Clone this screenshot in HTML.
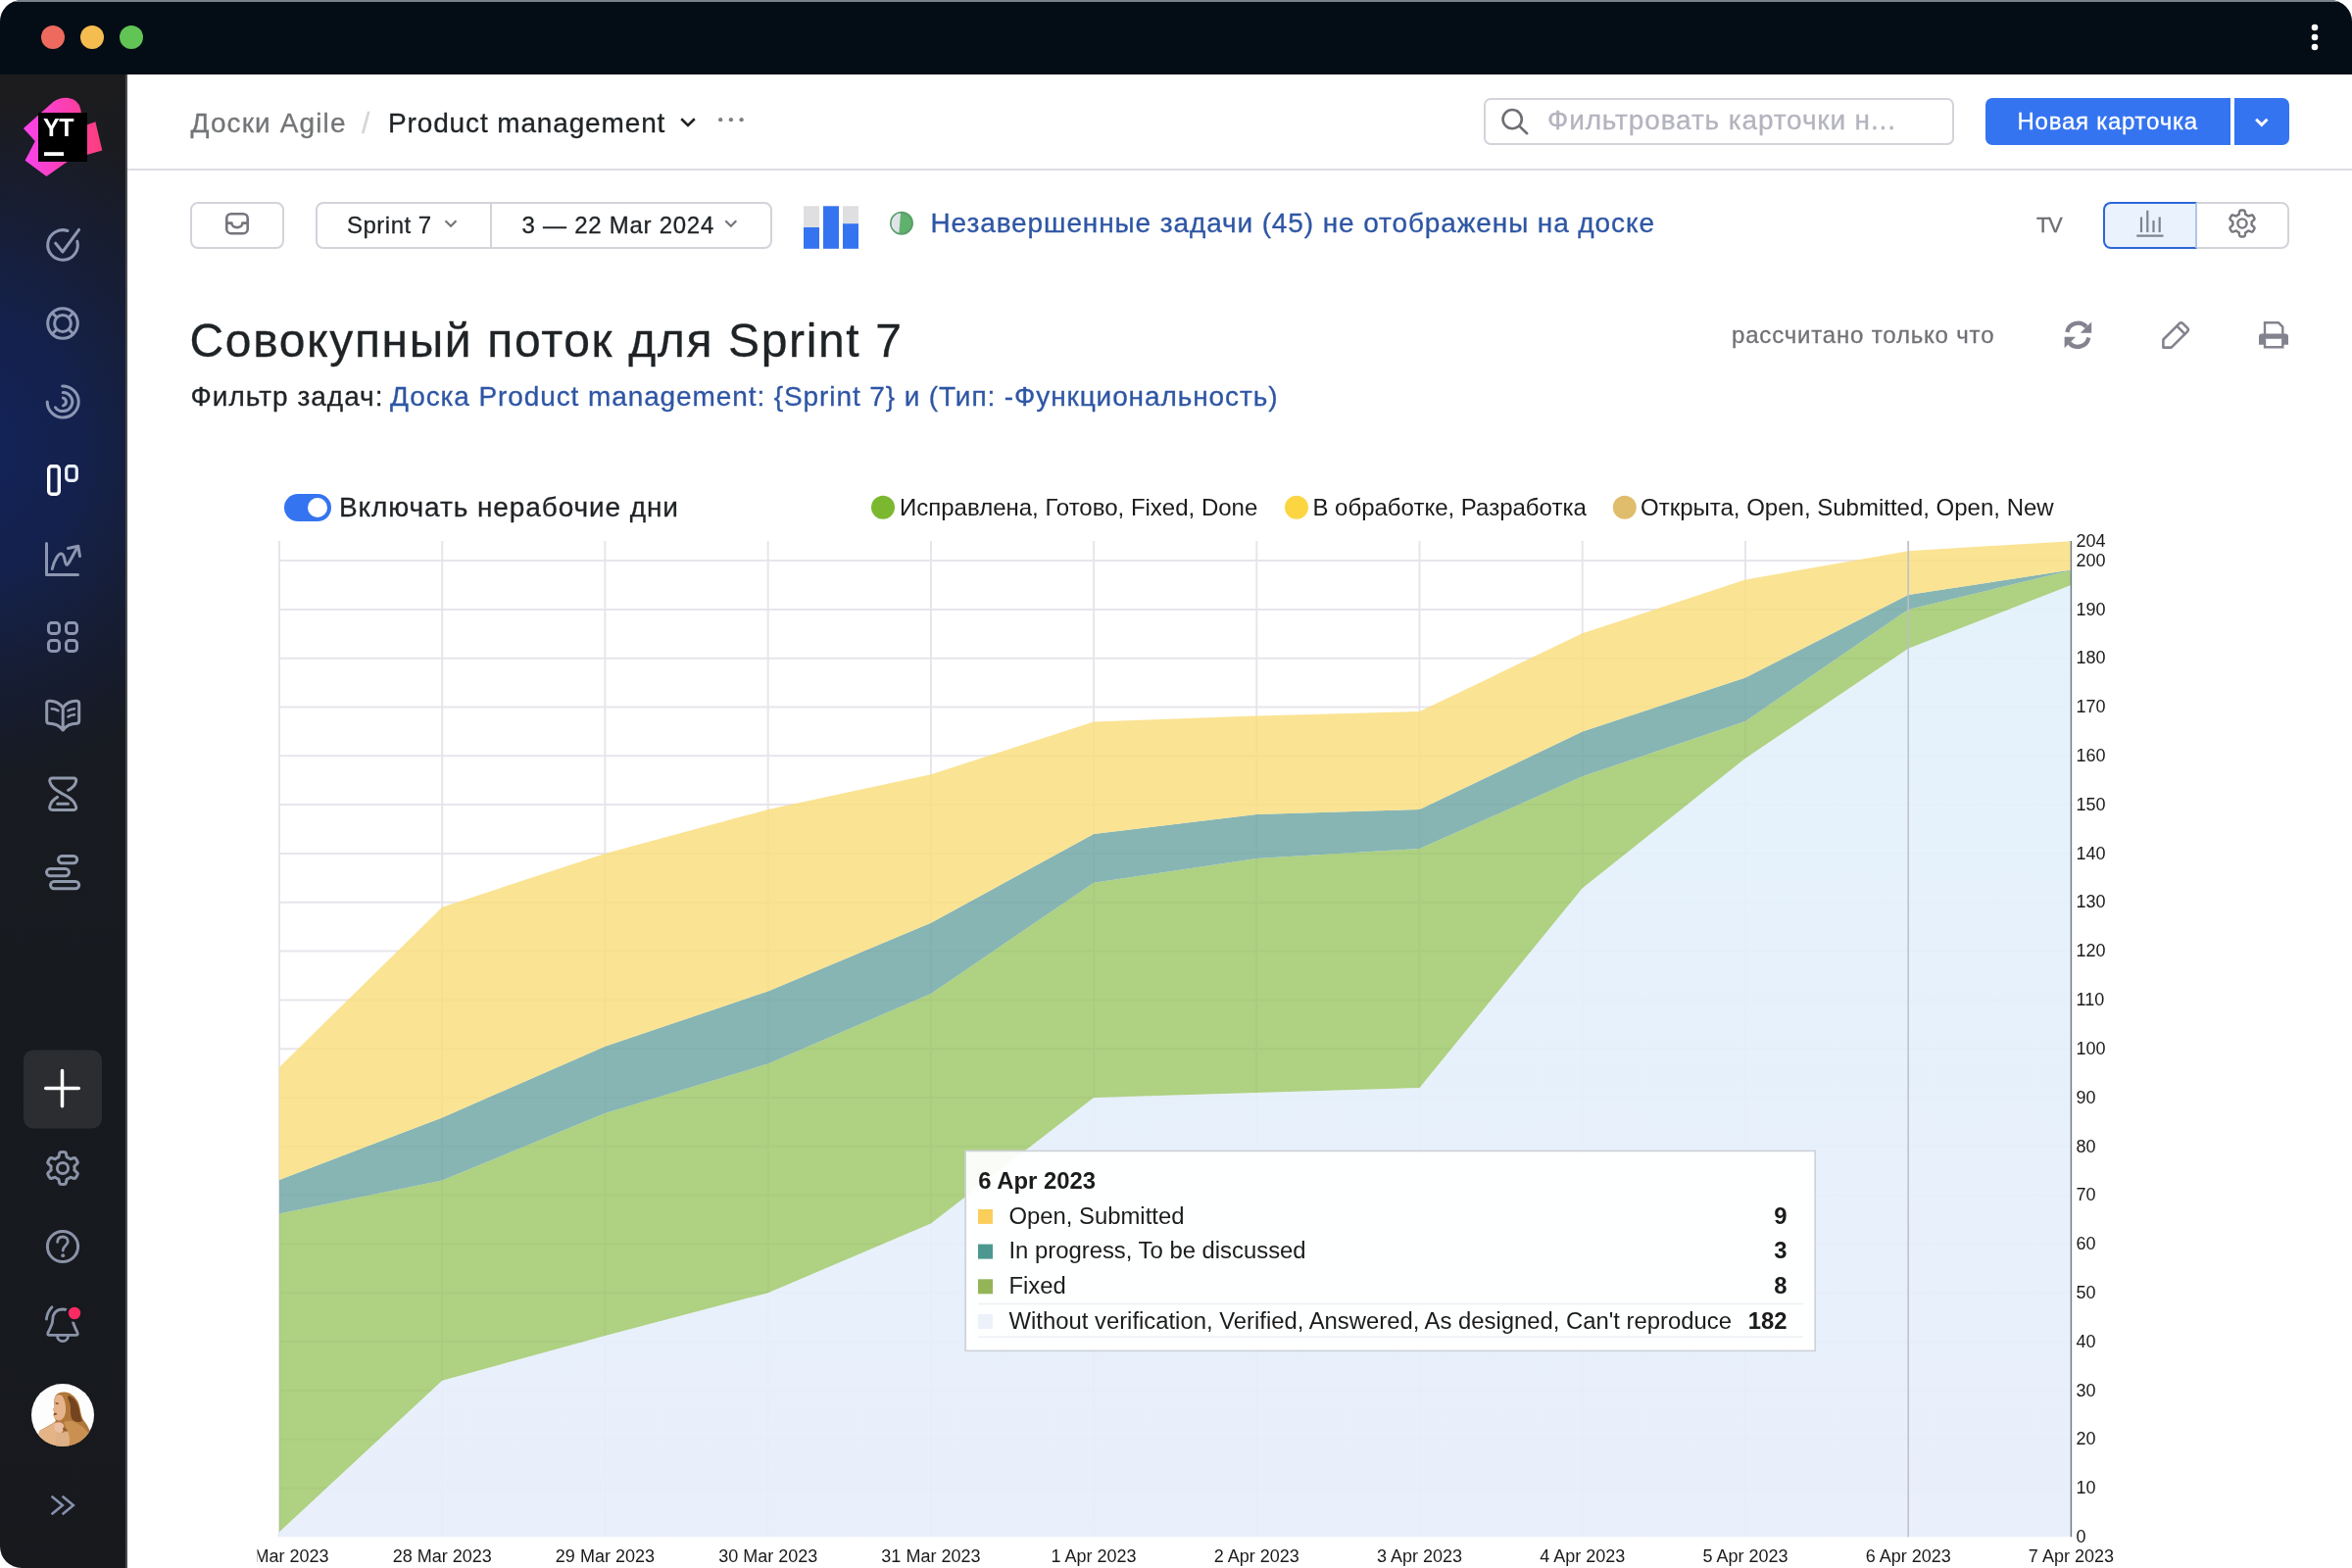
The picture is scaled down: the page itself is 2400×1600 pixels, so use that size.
<!DOCTYPE html>
<html lang="ru"><head><meta charset="utf-8"><title>Совокупный поток для Sprint 7</title>
<style>
html,body{margin:0;padding:0;background:#fff;}
body{width:2400px;height:1600px;position:relative;overflow:hidden;font-family:"Liberation Sans",Arial,sans-serif;}
.win{position:absolute;left:0;top:0;width:2400px;height:1600px;border-radius:22px;overflow:hidden;background:#fff;}
.titlebar{position:absolute;left:0;top:0;width:2400px;height:76px;background:#040d15;box-shadow:inset 0 2px 0 rgba(160,170,180,.75);}
.dot{position:absolute;top:26px;width:24px;height:24px;border-radius:50%;}
.side{position:absolute;left:0;top:76px;width:128px;height:1524px;border-right:2px solid #494b51;
 background:radial-gradient(ellipse 300px 350px at -30px 380px,#13245a 0%,#14214e 35%,rgba(20,32,72,.6) 62%,rgba(24,27,36,0) 100%),linear-gradient(#1c1c1e 0,#191b22 12%,#171a1f 60%,#17191d 100%);}
.hdrline{position:absolute;left:130px;top:172px;width:2270px;height:2px;background:#dddde3;}
.t{position:absolute;white-space:nowrap;-webkit-text-stroke:.3px currentColor;}
.win{will-change:transform;}
.box{position:absolute;box-sizing:border-box;border:2px solid #d3d3da;border-radius:7px;background:#fff;}
svg{position:absolute;left:0;top:0;}
</style></head><body>
<div class="win">
<div class="titlebar">
 <div class="dot" style="left:42px;background:#ee6a5f"></div>
 <div class="dot" style="left:82px;background:#f5bd4f"></div>
 <div class="dot" style="left:122px;background:#61c454"></div>
</div>
<div class="side"></div>
<div class="hdrline"></div>
<div class="t " style="left:194.5px;top:111.8px;font-size:28px;line-height:28px;color:#737577;letter-spacing:1.121px;">Доски Agile</div>
<div class="t " style="left:369.0px;top:110.6px;font-size:30px;line-height:30px;color:#d4d4d9;">/</div>
<div class="t " style="left:396.0px;top:111.8px;font-size:28px;line-height:28px;color:#1f2326;letter-spacing:0.864px;">Product management</div>
<div class="box" style="left:1514px;top:100px;width:480px;height:48px;"></div>
<div class="t " style="left:1579.0px;top:108.8px;font-size:28px;line-height:28px;color:#b4b4bf;letter-spacing:0.864px;">Фильтровать карточки н...</div>
<div style="position:absolute;left:2026px;top:100px;width:250px;height:48px;background:#3574f0;border-radius:7px 0 0 7px;"></div>
<div style="position:absolute;left:2280px;top:100px;width:56px;height:48px;background:#3574f0;border-radius:0 7px 7px 0;"></div>
<div class="t " style="left:2058.5px;top:111.7px;font-size:24px;line-height:24px;color:#ffffff;letter-spacing:0.747px;">Новая карточка</div>
<div class="box" style="left:194px;top:206px;width:96px;height:48px;border-radius:8px;"></div>
<div class="box" style="left:322px;top:206px;width:466px;height:48px;border-radius:8px;"></div>
<div style="position:absolute;left:500px;top:208px;width:2px;height:44px;background:#d3d3da;"></div>
<div class="t " style="left:354.0px;top:217.5px;font-size:24px;line-height:24px;color:#1f2326;letter-spacing:0.498px;">Sprint 7</div>
<div class="t " style="left:532.5px;top:217.5px;font-size:24px;line-height:24px;color:#1f2326;letter-spacing:0.740px;">3 — 22 Mar 2024</div>
<div class="t " style="left:949.5px;top:213.5px;font-size:28px;line-height:28px;color:#2e56a4;letter-spacing:0.891px;">Незавершенные задачи (45) не отображены на доске</div>
<div class="t " style="left:2078.0px;top:219.4px;font-size:22px;line-height:22px;color:#6c6c72;letter-spacing:-1.514px;">TV</div>
<div class="box" style="left:2240px;top:206px;width:96px;height:48px;border-radius:0 8px 8px 0;"></div>
<div class="box" style="left:2146px;top:206px;width:96px;height:48px;border-radius:8px 0 0 8px;border-color:#2d66d6;background:#eaf2fd;border-right-color:#aec6ee;"></div>
<div class="t " style="left:193.5px;top:324.4px;font-size:48px;line-height:48px;color:#1f2326;letter-spacing:1.640px;">Совокупный поток для Sprint 7</div>
<div class="t " style="left:194.5px;top:390.7px;font-size:28px;line-height:28px;color:#1f2326;letter-spacing:1.007px;">Фильтр задач:</div>
<div class="t " style="left:398.0px;top:390.7px;font-size:28px;line-height:28px;color:#2e56a4;letter-spacing:0.901px;">Доска Product management: {Sprint 7} и (Тип: -Функциональность)</div>
<div class="t " style="left:1767.0px;top:330.3px;font-size:24px;line-height:24px;color:#707076;letter-spacing:0.820px;">рассчитано только что</div>
<div style="position:absolute;left:290px;top:504px;width:48px;height:28px;border-radius:14px;background:#3574f0;"></div>
<div style="position:absolute;left:314px;top:508px;width:20px;height:20px;border-radius:50%;background:#fff;"></div>
<div class="t " style="left:346.0px;top:503.6px;font-size:28px;line-height:28px;color:#1f2326;letter-spacing:0.909px;">Включать нерабочие дни</div>
<svg width="2400" height="1600" viewBox="0 0 2400 1600" style="font-family:'Liberation Sans',Arial,sans-serif">
<defs><linearGradient id="bg" x1="0" y1="600" x2="0" y2="1568" gradientUnits="userSpaceOnUse"><stop offset="0" stop-color="#e2f1fb"/><stop offset="1" stop-color="#e7eefb"/></linearGradient><clipPath id="cc"><rect x="262.5" y="440" width="2137.5" height="1160"/></clipPath></defs>
<g clip-path="url(#cc)">
<path d="M285.0 552V1568.2M451.2 552V1568.2M617.4 552V1568.2M783.7 552V1568.2M949.9 552V1568.2M1116.1 552V1568.2M1282.3 552V1568.2M1448.5 552V1568.2M1614.7 552V1568.2M1781.0 552V1568.2M1947.2 552V1568.2M285.0 1518.4H2113.4M285.0 1468.6H2113.4M285.0 1418.8H2113.4M285.0 1369.0H2113.4M285.0 1319.2H2113.4M285.0 1269.4H2113.4M285.0 1219.6H2113.4M285.0 1169.8H2113.4M285.0 1120.0H2113.4M285.0 1070.2H2113.4M285.0 1020.4H2113.4M285.0 970.6H2113.4M285.0 920.7H2113.4M285.0 870.9H2113.4M285.0 821.1H2113.4M285.0 771.3H2113.4M285.0 721.5H2113.4M285.0 671.7H2113.4M285.0 621.9H2113.4M285.0 572.1H2113.4" stroke="#e7e5eb" stroke-width="2" fill="none"/>
<polygon points="285.0,1563.2 451.2,1408.8 617.4,1363.0 783.7,1319.2 949.9,1248.5 1116.1,1120.0 1282.3,1115.0 1448.5,1110.0 1614.7,906.3 1781.0,773.8 1947.2,661.8 2113.4,597.0 2113.4,1568.2 1947.2,1568.2 1781.0,1568.2 1614.7,1568.2 1448.5,1568.2 1282.3,1568.2 1116.1,1568.2 949.9,1568.2 783.7,1568.2 617.4,1568.2 451.2,1568.2 285.0,1568.2" fill="url(#bg)" fill-opacity="0.92"/>
<polygon points="285.0,1238.5 451.2,1204.6 617.4,1135.9 783.7,1085.6 949.9,1013.9 1116.1,900.8 1282.3,875.9 1448.5,866.0 1614.7,792.3 1781.0,736.0 1947.2,621.9 2113.4,582.1 2113.4,597.0 1947.2,661.8 1781.0,773.8 1614.7,906.3 1448.5,1110.0 1282.3,1115.0 1116.1,1120.0 949.9,1248.5 783.7,1319.2 617.4,1363.0 451.2,1408.8 285.0,1563.2" fill="#9ac663" fill-opacity="0.8"/>
<polygon points="285.0,1204.1 451.2,1140.4 617.4,1067.7 783.7,1011.4 949.9,941.7 1116.1,851.0 1282.3,831.1 1448.5,826.1 1614.7,746.4 1781.0,691.6 1947.2,607.0 2113.4,581.6 2113.4,582.1 1947.2,621.9 1781.0,736.0 1614.7,792.3 1448.5,866.0 1282.3,875.9 1116.1,900.8 949.9,1013.9 783.7,1085.6 617.4,1135.9 451.2,1204.6 285.0,1238.5" fill="#72a8a6" fill-opacity="0.85"/>
<polygon points="285.0,1089.1 451.2,925.7 617.4,870.9 783.7,826.1 949.9,790.3 1116.1,736.5 1282.3,730.5 1448.5,726.0 1614.7,646.3 1781.0,591.5 1947.2,562.2 2113.4,552.2 2113.4,581.6 1947.2,607.0 1781.0,691.6 1614.7,746.4 1448.5,826.1 1282.3,831.1 1116.1,851.0 949.9,941.7 783.7,1011.4 617.4,1067.7 451.2,1140.4 285.0,1204.1" fill="#f9de80" fill-opacity="0.85"/>
<path d="M1947.2 552V1568.2" stroke="#bcc0c9" stroke-opacity=".95" stroke-width="1.6"/>
<path d="M2113.4 552V1568.2" stroke="#737d88" stroke-width="1.5"/>
<g font-size="18" fill="#1b1b1b" text-anchor="middle">
<text x="285.0" y="1594">27 Mar 2023</text><text x="451.2" y="1594">28 Mar 2023</text><text x="617.4" y="1594">29 Mar 2023</text><text x="783.7" y="1594">30 Mar 2023</text><text x="949.9" y="1594">31 Mar 2023</text><text x="1116.1" y="1594">1 Apr 2023</text><text x="1282.3" y="1594">2 Apr 2023</text><text x="1448.5" y="1594">3 Apr 2023</text><text x="1614.7" y="1594">4 Apr 2023</text><text x="1781.0" y="1594">5 Apr 2023</text><text x="1947.2" y="1594">6 Apr 2023</text><text x="2113.4" y="1594">7 Apr 2023</text>
</g>
<g font-size="18" fill="#1b1b1b">
<text x="2118.5" y="557.9">204</text><text x="2118.5" y="577.8">200</text><text x="2118.5" y="627.6">190</text><text x="2118.5" y="677.4">180</text><text x="2118.5" y="727.2">170</text><text x="2118.5" y="777.0">160</text><text x="2118.5" y="826.8">150</text><text x="2118.5" y="876.6">140</text><text x="2118.5" y="926.4">130</text><text x="2118.5" y="976.3">120</text><text x="2118.5" y="1026.1">110</text><text x="2118.5" y="1075.9">100</text><text x="2118.5" y="1125.7">90</text><text x="2118.5" y="1175.5">80</text><text x="2118.5" y="1225.3">70</text><text x="2118.5" y="1275.1">60</text><text x="2118.5" y="1324.9">50</text><text x="2118.5" y="1374.7">40</text><text x="2118.5" y="1424.5">30</text><text x="2118.5" y="1474.3">20</text><text x="2118.5" y="1524.1">10</text><text x="2118.5" y="1573.9">0</text>
</g>
<g font-size="24" fill="#1b1b1b">
<circle cx="901" cy="517.8" r="12" fill="#7cb82f"/><text x="918" y="526.3">Исправлена, Готово, Fixed, Done</text>
<circle cx="1323" cy="517.8" r="12" fill="#fcd543"/><text x="1339.4" y="526.3">В обработке, Разработка</text>
<circle cx="1657.8" cy="517.8" r="12" fill="#e0bd6c"/><text x="1674" y="526.3">Открыта, Open, Submitted, Open, New</text>
</g>
<rect x="985.2" y="1174.4" width="867" height="204" fill="#fff" fill-opacity=".95" stroke="#ced2d9" stroke-width="1.7"/>
<path d="M998 1330.6H1840M998 1364.3H1840" stroke="#eef0f4" stroke-width="1.5"/>
<g font-size="23.85" fill="#1b1b1b">
<text x="998.3" y="1212.7" font-weight="700">6 Apr 2023</text>
<rect x="998" y="1233.9" width="15" height="15" fill="#f9ce5b"/><text x="1029.5" y="1248.5">Open, Submitted</text><text x="1823.5" y="1248.5" text-anchor="end" font-weight="700">9</text>
<rect x="998" y="1269.6" width="15" height="15" fill="#4c9890"/><text x="1029.5" y="1284.2">In progress, To be discussed</text><text x="1823.5" y="1284.2" text-anchor="end" font-weight="700">3</text>
<rect x="998" y="1305.3" width="15" height="15" fill="#93b557"/><text x="1029.5" y="1319.9">Fixed</text><text x="1823.5" y="1319.9" text-anchor="end" font-weight="700">8</text>
<rect x="998" y="1341.0" width="15" height="15" fill="#edf1f9"/><text x="1029.5" y="1355.6">Without verification, Verified, Answered, As designed, Can't reproduce</text><text x="1823.5" y="1355.6" text-anchor="end" font-weight="700">182</text>
</g>
</g>
</svg>
<svg width="2400" height="1600" viewBox="0 0 2400 1600" fill="none" stroke-linecap="round" stroke-linejoin="round" style="font-family:'Liberation Sans',Arial,sans-serif">
<defs><linearGradient id="yg" x1="24" y1="140" x2="104" y2="140" gradientUnits="userSpaceOnUse"><stop offset="0" stop-color="#f843ee"/><stop offset=".55" stop-color="#fb3fb0"/><stop offset="1" stop-color="#fd3d7c"/></linearGradient></defs>
<g fill="#fff" stroke="none"><circle cx="2362" cy="28" r="3.3"/><circle cx="2362" cy="38" r="3.3"/><circle cx="2362" cy="48" r="3.3"/></g>
<path d="M23.9 130.9 L54.5 103.8 Q61 99.4 68.5 99.8 Q80.5 101 82.4 112 L83 116 L89 127.2 L97.4 124.2 L104.3 153.5 L88.6 158 L68 165.5 L47.4 179.9 L25.6 163.7 L35.8 144.1 Z" fill="url(#yg)" stroke="none"/>
<rect x="39" y="115" width="50" height="50" fill="#000" stroke="none"/>
<text x="44" y="139.4" font-size="25" font-weight="700" fill="#fff" stroke="none" letter-spacing="-0.5">YT</text>
<rect x="45" y="155.2" width="20" height="3.8" fill="#fff" stroke="none"/>
<g stroke="#8d97b3" stroke-width="3">
<path d="M78.85 246.30A15.3 15.3 0 1 1 68.98 235.53"/><path d="M56.7 248.2L63.9 257L80.6 234.4"/>
<circle cx="64" cy="330" r="15.3"/><circle cx="64" cy="330" r="8.4"/><path d="M70.72 336.72L74.25 340.25M57.28 336.72L53.75 340.25M57.28 323.28L53.75 319.75M70.72 323.28L74.25 319.75"/>
<path d="M63.64 394.01A16 16 0 1 1 48.20 410.00"/><path d="M64.20 400.40A9.6 9.6 0 1 1 56.53 415.78"/><path d="M64.44 406.14A4 4 0 0 1 64.44 413.86"/>
</g>
<g stroke="#fff" stroke-width="3.4"><rect x="49.7" y="475.7" width="10.6" height="28.6" rx="3"/><rect x="67.7" y="475.7" width="10.6" height="14.6" rx="3" stroke="#e9eefb" stroke-width="3.2"/></g>
<g stroke="#8c96b0" stroke-width="3">
<path d="M47.5 554.5V586.5H79.5"/><path d="M53.3 580.5C55.5 571 59.5 565 62.5 565C66.5 565 65.5 574.5 67.8 576.2C69.5 577.4 74 567 79 558.5"/><path d="M69.5 559.5L79.8 557.2L81.5 567.5"/>
<rect x="49.5" y="635.5" width="11" height="11" rx="3.2"/><rect x="67.5" y="635.5" width="11" height="11" rx="3.2"/><rect x="49.5" y="653.5" width="11" height="11" rx="3.2"/><rect x="67.5" y="653.5" width="11" height="11" rx="3.2"/>
</g>
<g stroke="#9099ac" stroke-width="3">
<path d="M64.2 722C60.5 717.3 55 715 50 715.3Q47.7 715.5 47.7 718V735.5Q47.7 738.2 50.3 738.2C55.5 738.2 60.5 740 64.2 745C67.9 740 72.9 738.2 78.1 738.2Q80.7 738.2 80.7 735.5V718Q80.7 715.5 78.4 715.3C73.4 715 67.9 717.3 64.2 722ZM64.2 722V744"/>
<path d="M52.8 723.3Q56.5 723.3 59.3 725.2M69.5 725.2Q72.5 723.5 76 723.2M69.5 731.3Q72.5 729.6 76 729.3" stroke-width="2.6"/>
<path d="M53.5 794H75Q78.3 794 77.6 797.5C76.6 802 73.5 804.3 69.6 806.3M53.5 826.4H75Q78.3 826.4 77.6 823C76 816 69 813 64.2 810.2C59.4 807.4 52.4 804.4 50.8 797.5Q50.2 794 53.5 794M53.5 826.4Q50.2 826.4 50.8 823C51.8 818.4 54.8 815.6 58.6 813.4M58.7 820.3H69.5"/>
<rect x="59.5" y="873.4" width="19.2" height="7.4" rx="3.7"/><rect x="47.5" y="886.4" width="23" height="7.4" rx="3.7"/><rect x="51.5" y="899.4" width="29.2" height="7.4" rx="3.7"/>
</g>
<rect x="24" y="1071.5" width="80" height="80" rx="10" fill="#2b2d31" stroke="none"/>
<path d="M46.7 1110.6H80.3M63.5 1092.5V1128.7" stroke="#fff" stroke-width="3.5"/>
<g stroke="#8a93a8" stroke-width="3">
<path d="M76.00 1192.00L75.98 1192.63L75.93 1193.25L75.85 1193.88L76.43 1194.64L77.72 1195.68L78.93 1196.85L79.31 1197.88L78.98 1198.67L78.61 1199.45L78.20 1200.20L77.75 1200.93L77.27 1201.64L76.75 1202.32L75.66 1202.50L74.04 1202.04L72.50 1201.44L71.55 1201.33L71.05 1201.71L70.54 1202.06L70.00 1202.39L69.45 1202.69L68.88 1202.96L68.30 1203.20L67.93 1204.08L67.68 1205.72L67.26 1207.35L66.57 1208.20L65.71 1208.31L64.86 1208.38L64.00 1208.40L63.14 1208.38L62.29 1208.31L61.43 1208.20L60.74 1207.35L60.32 1205.72L60.07 1204.08L59.70 1203.20L59.12 1202.96L58.55 1202.69L58.00 1202.39L57.46 1202.06L56.95 1201.71L56.45 1201.33L55.50 1201.44L53.96 1202.04L52.34 1202.50L51.25 1202.32L50.73 1201.64L50.25 1200.93L49.80 1200.20L49.39 1199.45L49.02 1198.67L48.69 1197.88L49.07 1196.85L50.28 1195.68L51.57 1194.64L52.15 1193.88L52.07 1193.25L52.02 1192.63L52.00 1192.00L52.02 1191.37L52.07 1190.75L52.15 1190.12L51.57 1189.36L50.28 1188.32L49.07 1187.15L48.69 1186.12L49.02 1185.33L49.39 1184.55L49.80 1183.80L50.25 1183.07L50.73 1182.36L51.25 1181.68L52.34 1181.50L53.96 1181.96L55.50 1182.56L56.45 1182.67L56.95 1182.29L57.46 1181.94L58.00 1181.61L58.55 1181.31L59.12 1181.04L59.70 1180.80L60.07 1179.92L60.32 1178.28L60.74 1176.65L61.43 1175.80L62.29 1175.69L63.14 1175.62L64.00 1175.60L64.86 1175.62L65.71 1175.69L66.57 1175.80L67.26 1176.65L67.68 1178.28L67.93 1179.92L68.30 1180.80L68.88 1181.04L69.45 1181.31L70.00 1181.61L70.54 1181.94L71.05 1182.29L71.55 1182.67L72.50 1182.56L74.04 1181.96L75.66 1181.50L76.75 1181.68L77.27 1182.36L77.75 1183.07L78.20 1183.80L78.61 1184.55L78.98 1185.33L79.31 1186.12L78.93 1187.15L77.72 1188.32L76.43 1189.36L75.85 1190.12L75.93 1190.75L75.98 1191.37Z"/><circle cx="64" cy="1192" r="5.6"/>
<circle cx="64" cy="1272" r="15.6"/><path d="M58.6 1267.3C58.8 1263.8 61.2 1262 64 1262C67 1262 69.3 1264 69.3 1266.8C69.3 1271 64.2 1271 64.2 1276" stroke-width="2.8"/><circle cx="64.2" cy="1281.2" r="1.9" fill="#8a93a8" stroke="none"/>
<path d="M53.2 1362.3H50.5Q48 1362.3 49 1359.8C51.5 1354 53.8 1352 53.8 1346.5C53.8 1340 58 1336 64 1336C70 1336 74.3 1340 74.3 1346.5C74.3 1352 76.5 1354 79 1359.8Q80 1362.3 77.5 1362.3H53.2M58.5 1363C58.5 1366.3 61 1368.6 64 1368.6C67 1368.6 69.5 1366.3 69.5 1363M53 1333.8C50 1337 47.8 1341 47.4 1346.2" stroke-width="2.8"/>
</g>
<circle cx="76" cy="1340" r="9" fill="#17191d" stroke="none"/><circle cx="76" cy="1340" r="6.2" fill="#fb2a62" stroke="none"/>
<path d="M52.6 1526.8L63.8 1536L52.6 1545.2M63.6 1526.8L74.8 1536L63.6 1545.2" stroke="#8691ad" stroke-width="2.6" stroke-linejoin="miter" stroke-linecap="butt"/>
<defs><clipPath id="av"><circle cx="64" cy="1444" r="32"/></clipPath></defs>
<g clip-path="url(#av)" stroke="none"><rect x="32" y="1412" width="64" height="64" fill="#fdfdfd"/><path d="M56.5 1424.5C58 1421.5 62 1420.3 66.3 1420.6C71 1421 76 1424 79.6 1430.5C82 1436 82 1441 83.2 1444.8C85 1450 88 1452 89.5 1455.5C91 1458.5 92.5 1461 93 1464L88 1478H48L41 1459.5C46 1457 52 1454 57 1450C56 1447 54.5 1446 54.6 1443L55.5 1441L54.2 1438.5L55.6 1435C55 1431 55 1427.5 56.5 1424.5Z" fill="#b0763a"/><path d="M70 1424C76 1426 79 1431 80.5 1437C81.5 1442 82 1446 84 1450C80 1452 75 1451 73 1447C71 1442 73 1436 71 1431C70 1428 68 1426 70 1424Z" fill="#74431f"/><path d="M57 1424.3C59 1422.8 62 1423 63.5 1424.5C66 1428 67.5 1434 67 1440C66.5 1445 64 1449.5 60 1449.5C57.5 1449.5 56 1447.5 54.8 1445.2L54.6 1443.2L57.5 1442.3L55.6 1441L54.2 1438.3L55.8 1434.6C55.2 1431 55.5 1427 57 1424.3Z" fill="#e6b48c"/><path d="M56.6 1431.3L59.8 1431.7L59.4 1433L56.8 1432.6Z" fill="#5d3a1e"/><path d="M54.9 1442.6L58.4 1441.9L57.6 1443.6L55.2 1444.2Z" fill="#7a4a28"/><path d="M40 1460C45 1458 50 1455.5 54 1452.5C57 1450.5 60 1452 61 1456C62 1462 60 1470 58 1478H36Z" fill="#e4b486"/><path d="M57 1452C60 1450.5 63.5 1451 64.8 1454C66 1457.5 64 1461 61.5 1463C58.5 1462.5 56 1460 55.6 1457C55.4 1455 55.8 1453 57 1452Z" fill="#ecc0a4"/><path d="M58 1461C62 1463 66 1462 68 1459C72 1462 72 1470 70 1478H56C57 1472 57 1466 58 1461Z" fill="#ddb085"/><path d="M65 1451C70 1448.5 76 1450 80 1453C85 1456 89 1460 91 1464L86 1478H70C72 1470 71 1463 68 1459C67 1456 65.5 1454 65 1451Z" fill="#c99052"/><path d="M64.5 1456.5C66.5 1457 68.5 1458.5 69 1460.5C67 1460.8 65 1460 64 1458.5Z" fill="#8a5a2c"/></g>
<path d="M695.2 121.2L702 127.9L708.8 121.2" stroke="#1f2326" stroke-width="2.6" stroke-linecap="butt" stroke-linejoin="miter"/>
<g fill="#7d7f84" stroke="none"><circle cx="735.2" cy="122.2" r="2.15"/><circle cx="745.9" cy="122.2" r="2.15"/><circle cx="756.6" cy="122.2" r="2.15"/></g>
<g stroke="#6e6e74" stroke-width="2.6"><circle cx="1543.2" cy="121.6" r="9.6"/><path d="M1550.3 128.6L1558.2 136.2"/></g>
<path d="M2302.1 121.8L2307.8 127.4L2313.5 121.8" stroke="#fff" stroke-width="3" stroke-linecap="butt" stroke-linejoin="miter"/>
<g stroke="#75757d" stroke-width="2.6"><rect x="231.3" y="218.2" width="21.4" height="20" rx="4.5"/><path d="M231.5 227.6H236.4C236.4 233.6 247.4 233.6 247.4 227.6H252.5"/></g>
<path d="M454.5 225.2L460 230.8L465.5 225.2M740.3 225.2L745.8 230.8L751.3 225.2" stroke="#75757d" stroke-width="2.2" stroke-linecap="butt" stroke-linejoin="miter"/>
<g stroke="none"><rect x="820" y="210.3" width="16" height="21.7" fill="#dfdfe1"/><rect x="820" y="232" width="16" height="21.8" fill="#3574f0"/><rect x="840" y="210.3" width="16" height="43.5" fill="#3574f0"/><rect x="860" y="210.3" width="16" height="18" fill="#dfdfe1"/><rect x="860" y="228.2" width="16" height="25.6" fill="#3574f0"/></g>
<circle cx="920" cy="227.8" r="11" fill="#5fb16c" stroke="#5a9e6a" stroke-width="2"/><path d="M919 217.6A10.2 10.2 0 0 0 917.4 237.7Z" fill="#e0e4e9" stroke="none"/>
<path d="M2185 221.5V237M2191.3 214.8V237M2197.5 225V237M2203.7 221.5V237M2180.3 240.7H2207.5" stroke="#7b8490" stroke-width="2.2" stroke-linecap="butt"/>
<g stroke="#77777e" stroke-width="2.4"><path d="M2297.70 228.00L2297.69 228.51L2297.65 229.01L2297.58 229.52L2298.08 230.14L2299.20 231.00L2300.26 231.98L2300.60 232.84L2300.33 233.49L2300.03 234.13L2299.69 234.75L2299.32 235.35L2298.92 235.94L2298.49 236.50L2297.58 236.63L2296.20 236.20L2294.90 235.66L2294.10 235.54L2293.70 235.85L2293.28 236.14L2292.85 236.40L2292.40 236.64L2291.95 236.86L2291.48 237.06L2291.19 237.80L2291.00 239.20L2290.68 240.61L2290.11 241.33L2289.41 241.43L2288.71 241.48L2288.00 241.50L2287.29 241.48L2286.59 241.43L2285.89 241.33L2285.32 240.61L2285.00 239.20L2284.81 237.80L2284.52 237.06L2284.05 236.86L2283.60 236.64L2283.15 236.40L2282.72 236.14L2282.30 235.85L2281.90 235.54L2281.10 235.66L2279.80 236.20L2278.42 236.63L2277.51 236.50L2277.08 235.94L2276.68 235.35L2276.31 234.75L2275.97 234.13L2275.67 233.49L2275.40 232.84L2275.74 231.98L2276.80 231.00L2277.92 230.14L2278.42 229.52L2278.35 229.01L2278.31 228.51L2278.30 228.00L2278.31 227.49L2278.35 226.99L2278.42 226.48L2277.92 225.86L2276.80 225.00L2275.74 224.02L2275.40 223.16L2275.67 222.51L2275.97 221.87L2276.31 221.25L2276.68 220.65L2277.08 220.06L2277.51 219.50L2278.42 219.37L2279.80 219.80L2281.10 220.34L2281.90 220.46L2282.30 220.15L2282.72 219.86L2283.15 219.60L2283.60 219.36L2284.05 219.14L2284.52 218.94L2284.81 218.20L2285.00 216.80L2285.32 215.39L2285.89 214.67L2286.59 214.57L2287.29 214.52L2288.00 214.50L2288.71 214.52L2289.41 214.57L2290.11 214.67L2290.68 215.39L2291.00 216.80L2291.19 218.20L2291.48 218.94L2291.95 219.14L2292.40 219.36L2292.85 219.60L2293.28 219.86L2293.70 220.15L2294.10 220.46L2294.90 220.34L2296.20 219.80L2297.58 219.37L2298.49 219.50L2298.92 220.06L2299.32 220.65L2299.69 221.25L2300.03 221.87L2300.33 222.51L2300.60 223.16L2300.26 224.02L2299.20 225.00L2298.08 225.86L2297.58 226.48L2297.65 226.99L2297.69 227.49Z"/><circle cx="2288" cy="228" r="4.6"/></g>
<g stroke="#83838f" stroke-width="4.2" stroke-linecap="butt"><path d="M2109.3 339A11.4 11.4 0 0 1 2129 333.5"/><path d="M2131.3 344.5A11.4 11.4 0 0 1 2111.6 350"/></g>
<g fill="#83838f" stroke="none"><path d="M2134.2 328.4V339.8H2122.8Z"/><path d="M2106.6 355.2V343.8H2118Z"/></g>
<g stroke="#83838f" stroke-width="2.6"><path d="M2207.4 354.6V346.5L2223.8 330.1Q2225.6 328.3 2227.4 330.1L2232 334.7Q2233.8 336.5 2232 338.3L2215.6 354.6Z"/><path d="M2221.5 332.8L2229.5 340.8"/></g>
<g stroke="none" fill="#83838f"><path d="M2308 340.5H2332Q2335 340.5 2335 343.5V351.8H2329.5V345.8H2310.5V351.8H2305V343.5Q2305 340.5 2308 340.5Z"/></g>
<g stroke="#83838f" stroke-width="2.4" stroke-linejoin="miter"><path d="M2311 341V329.3H2325L2329.3 333.6V341"/><path d="M2311 346.5V354.3H2329.3V346.5"/></g>
</svg>
</div></body></html>
